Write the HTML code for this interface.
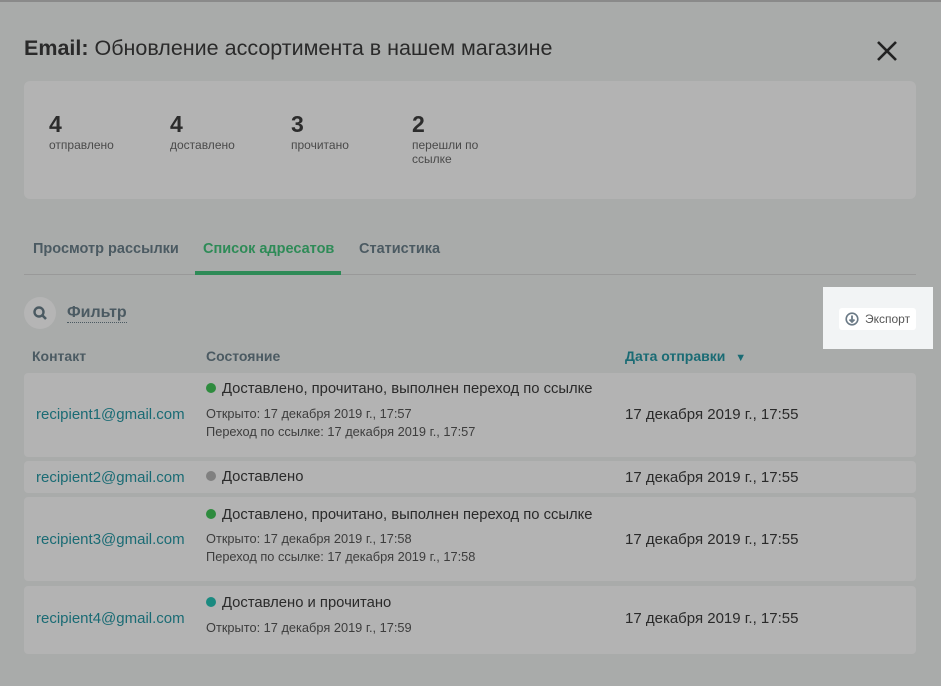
<!DOCTYPE html>
<html><head><meta charset="utf-8"><style>
*{margin:0;padding:0;box-sizing:border-box}
body{width:941px;height:686px;background:#a9abaa;font-family:"Liberation Sans",sans-serif;color:#2b2b2b;position:relative;overflow:hidden}
.a{position:absolute;white-space:nowrap}
.card{position:absolute;left:24px;width:892px;background:#b3b3b3;border-radius:4px}
.num{font-size:23px;color:#2c2c2c;font-weight:bold}
.lbl{font-size:12px;color:#4a4a4a;line-height:14px}
.tab{font-size:14.5px;font-weight:bold;color:#4b5a62}
.hd{font-size:14px;font-weight:bold;color:#4b5a62}
.mail{font-size:15px;color:#1a6b74}
.st{font-size:14.8px;color:#2a2a2a}
.sm{font-size:12.8px;color:#3d3d3d}
.dt{font-size:15px;color:#2a2a2a}
.dot{display:inline-block;width:10px;height:10px;border-radius:50%;margin-right:6px;vertical-align:0}
</style></head><body>
<div class="a" style="left:0;top:0;width:941px;height:2px;background:#8a8a8a"></div>
<div class="a" style="left:24px;top:36px;font-size:21.5px;color:#2a2a2a"><b>Email:</b> Обновление ассортимента в нашем магазине</div>
<svg class="a" style="left:876px;top:40px" width="22" height="22"><path d="M2 2L20 20M20 2L2 20" stroke="#222" stroke-width="2.6"/></svg>
<div class="card" style="top:81px;height:118px;border-radius:6px"></div>
<div class="a num" style="left:49px;top:111px">4</div><div class="a lbl" style="left:49px;top:138px">отправлено</div>
<div class="a num" style="left:170px;top:111px">4</div><div class="a lbl" style="left:170px;top:138px">доставлено</div>
<div class="a num" style="left:291px;top:111px">3</div><div class="a lbl" style="left:291px;top:138px">прочитано</div>
<div class="a num" style="left:412px;top:111px">2</div><div class="a lbl" style="left:412px;top:138px">перешли по<br>ссылке</div>
<div class="a tab" style="left:33px;top:241px">Просмотр рассылки</div>
<div class="a tab" style="left:203px;top:241px;color:#2e8b57">Список адресатов</div>
<div class="a tab" style="left:359px;top:241px">Статистика</div>
<div class="a" style="left:24px;top:274px;width:892px;height:1px;background:#999"></div>
<div class="a" style="left:195px;top:271px;width:146px;height:4px;background:#2e8b57"></div>
<div class="a" style="left:24px;top:297px;width:32px;height:32px;border-radius:50%;background:#b5b5b5"></div>
<svg class="a" style="left:32px;top:305px" width="16" height="16"><circle cx="7" cy="7" r="4.5" fill="none" stroke="#4b5a62" stroke-width="2.4"/><path d="M10 10L14 14" stroke="#4b5a62" stroke-width="2.6"/></svg>
<div class="a" style="left:67px;top:304px;font-size:16px;font-weight:bold;color:#4b5a62;border-bottom:1px dotted #4b5a62;line-height:18px">Фильтр</div>
<div class="a" style="left:823px;top:287px;width:110px;height:62px;background:#f2f4f5"></div>
<div class="a" style="left:839px;top:308px;width:77px;height:22px;background:#fff;border-radius:3px"></div>
<svg class="a" style="left:845px;top:312px" width="14" height="14"><circle cx="7" cy="7" r="5.8" fill="none" stroke="#6b7a86" stroke-width="1.6"/><path d="M7 3.5V9M4.5 7.5L7 10L9.5 7.5" stroke="#6b7a86" stroke-width="1.8" fill="none"/></svg>
<div class="a" style="left:865px;top:312px;font-size:12px;color:#555">Экспорт</div>
<div class="a hd" style="left:32px;top:348px">Контакт</div>
<div class="a hd" style="left:206px;top:348px">Состояние</div>
<div class="a hd" style="left:625px;top:348px;color:#1a6b74">Дата отправки <span style="font-size:11px;margin-left:6px">▼</span></div>

<div class="card" style="top:373px;height:84px"></div>
<div class="a mail" style="left:36px;top:406px">recipient1@gmail.com</div>
<div class="a st" style="left:206px;top:381px"><span class="dot" style="background:#2e8b3e"></span>Доставлено, прочитано, выполнен переход по ссылке</div>
<div class="a sm" style="left:206px;top:406px">Открыто: 17 декабря 2019 г., 17:57</div>
<div class="a sm" style="left:206px;top:424px">Переход по ссылке: 17 декабря 2019 г., 17:57</div>
<div class="a dt" style="left:625px;top:406px">17 декабря 2019 г., 17:55</div>

<div class="card" style="top:461px;height:32px"></div>
<div class="a mail" style="left:36px;top:469px">recipient2@gmail.com</div>
<div class="a st" style="left:206px;top:469px"><span class="dot" style="background:#808080"></span>Доставлено</div>
<div class="a dt" style="left:625px;top:469px">17 декабря 2019 г., 17:55</div>

<div class="card" style="top:497px;height:84px"></div>
<div class="a mail" style="left:36px;top:531px">recipient3@gmail.com</div>
<div class="a st" style="left:206px;top:507px"><span class="dot" style="background:#2e8b3e"></span>Доставлено, прочитано, выполнен переход по ссылке</div>
<div class="a sm" style="left:206px;top:531px">Открыто: 17 декабря 2019 г., 17:58</div>
<div class="a sm" style="left:206px;top:549px">Переход по ссылке: 17 декабря 2019 г., 17:58</div>
<div class="a dt" style="left:625px;top:531px">17 декабря 2019 г., 17:55</div>

<div class="card" style="top:586px;height:68px"></div>
<div class="a mail" style="left:36px;top:610px">recipient4@gmail.com</div>
<div class="a st" style="left:206px;top:595px"><span class="dot" style="background:#1a8a80"></span>Доставлено и прочитано</div>
<div class="a sm" style="left:206px;top:620px">Открыто: 17 декабря 2019 г., 17:59</div>
<div class="a dt" style="left:625px;top:610px">17 декабря 2019 г., 17:55</div>
</body></html>
